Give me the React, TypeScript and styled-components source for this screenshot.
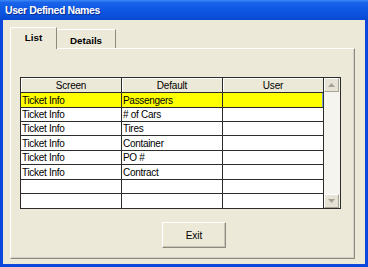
import React from 'react';
import styled, { createGlobalStyle, css } from 'styled-components';

const GlobalStyle = createGlobalStyle`
    html, body {
        margin: 0;
        padding: 0;
        background: #ece9d8;
    }
    * {
        box-sizing: border-box;
    }
`;

interface Row {
    screen: string;
    value: string;
    user: string;
    height: number;
}

const rows: Row[] = [
    { screen: 'Ticket Info', value: 'Passengers', user: '', height: 15 },
    { screen: 'Ticket Info', value: '# of Cars', user: '', height: 14 },
    { screen: 'Ticket Info', value: 'Tires', user: '', height: 14 },
    { screen: 'Ticket Info', value: 'Container', user: '', height: 15 },
    { screen: 'Ticket Info', value: 'PO #', user: '', height: 14 },
    { screen: 'Ticket Info', value: 'Contract', user: '', height: 15 },
    { screen: '', value: '', user: '', height: 14 },
    { screen: '', value: '', user: '', height: 15 },
];

const Window = styled.div`
    width: 368px;
    height: 267px;
    display: flex;
    flex-direction: column;
    background: #0b48db;
    font-family: 'Liberation Sans', Arial, sans-serif;
`;

const TitleBar = styled.div`
    height: 20px;
    flex: none;
    display: flex;
    align-items: center;
    padding: 0 0 1px 5px;
    background: linear-gradient(to bottom, #3d8af7 0%, #1a63ea 12%, #0d56e3 50%, #0a4fd9 85%, #0845cc 100%);
    color: #ffffff;
    font-size: 10.5px;
    font-weight: bold;
    letter-spacing: -0.4px;
    text-shadow: 1px 1px 0 #0a2f8f;
`;

const Client = styled.div`
    flex: 1;
    display: flex;
    flex-direction: column;
    margin: 0 3px 3px 3px;
    padding: 7px 10px 5px 7px;
    background: #ece9d8;
`;

const TabStrip = styled.div`
    height: 21px;
    flex: none;
    display: flex;
    align-items: flex-end;
`;

const Tab = styled.div<{ $active?: boolean; $width: number }>`
    width: ${({ $width }) => $width}px;
    display: flex;
    align-items: center;
    justify-content: center;
    border-top: 1px solid #ffffff;
    border-left: 1px solid #ffffff;
    border-right: 1px solid #8d8b80;
    background: #ece9d8;
    color: #000000;
    font-size: 9.8px;
    font-weight: bold;
    ${({ $active }) =>
        $active
            ? css`
                  height: 22px;
                  margin-bottom: -1px;
                  padding-bottom: 2px;
                  position: relative;
                  z-index: 1;
              `
            : css`
                  height: 19px;
                  padding-top: 2px;
                  border-left: none;
              `}
`;

const Panel = styled.div`
    flex: 1;
    display: flex;
    flex-direction: column;
    align-items: flex-start;
    padding: 28px 0 0 9px;
    border-top: 1px solid #ffffff;
    border-left: 1px solid #ffffff;
    border-right: 1px solid #8d8b80;
    border-bottom: 1px solid #8d8b80;
    box-shadow: inset -1px -1px 0 #d4d0c4;
`;

const GridFrame = styled.div`
    display: flex;
    flex: none;
`;

const Grid = styled.div`
    display: grid;
    grid-template-columns: 101px 101px 101px;
    border-left: 1px solid #2c2c2c;
    border-top: 1px solid #2c2c2c;
`;

const HeaderCell = styled.div`
    height: 15px;
    display: flex;
    align-items: center;
    justify-content: center;
    background: #ece9d8;
    border-right: 1px solid #2c2c2c;
    border-bottom: 1px solid #2c2c2c;
    box-shadow: inset 1px 1px 0 #ffffff;
    font-size: 10px;
    letter-spacing: -0.2px;
    color: #000000;
`;

const Cell = styled.div<{ $selected?: boolean; $height: number; $focus?: boolean }>`
    height: ${({ $height }) => $height}px;
    display: flex;
    align-items: center;
    padding-left: 1px;
    overflow: hidden;
    white-space: nowrap;
    background: ${({ $selected }) => ($selected ? '#ffff00' : '#ffffff')};
    border-right: 1px solid #2c2c2c;
    border-bottom: 1px solid #2c2c2c;
    font-size: 10px;
    letter-spacing: -0.3px;
    color: #000000;
    ${({ $focus }) =>
        $focus &&
        css`
            box-shadow: inset -1px 0 0 #7fa2dc;
        `}
`;

const ScrollBar = styled.div`
    width: 17px;
    display: flex;
    flex-direction: column;
    justify-content: space-between;
    background: #f5f4ef;
    border-top: 1px solid #2c2c2c;
    border-right: 1px solid #2c2c2c;
    border-bottom: 1px solid #2c2c2c;
    padding: 0 1px 0 0;
`;

const ScrollButton = styled.div`
    width: 15px;
    height: 14px;
    display: flex;
    align-items: center;
    justify-content: center;
    background: #e6e3d6;
    border-top: 1px solid #ffffff;
    border-left: 1px solid #ffffff;
    border-right: 1px solid #a7a596;
    border-bottom: 1px solid #a7a596;
`;

const ButtonRow = styled.div`
    margin: 13px 0 0 142px;
`;

const Button = styled.button`
    width: 64px;
    height: 26px;
    padding: 0;
    background: #ece9d8;
    border-top: 1px solid #ffffff;
    border-left: 1px solid #ffffff;
    border-right: 1px solid #8d8b80;
    border-bottom: 1px solid #8d8b80;
    box-shadow: inset -1px -1px 0 #c9c6b8;
    font-family: 'Liberation Sans', Arial, sans-serif;
    font-size: 10px;
    color: #000000;
`;

const Arrow = ({ down }: { down?: boolean }) => (
    <svg width="7" height="4" viewBox="0 0 7 4">
        <path d={down ? 'M0 0 H7 L3.5 4 Z' : 'M0 4 H7 L3.5 0 Z'} fill="#a4a296" />
    </svg>
);

export default function App() {
    return (
        <>
            <GlobalStyle />
            <Window>
                <TitleBar>User Defined Names</TitleBar>
                <Client>
                    <TabStrip>
                        <Tab $active $width={47}>List</Tab>
                        <Tab $width={59}>Details</Tab>
                    </TabStrip>
                    <Panel>
                        <GridFrame>
                            <Grid>
                                <HeaderCell>Screen</HeaderCell>
                                <HeaderCell>Default</HeaderCell>
                                <HeaderCell>User</HeaderCell>
                                {rows.map((row, i) => (
                                    <React.Fragment key={i}>
                                        <Cell $height={row.height} $selected={i === 0}>{row.screen}</Cell>
                                        <Cell $height={row.height} $selected={i === 0}>{row.value}</Cell>
                                        <Cell $height={row.height} $selected={i === 0} $focus={i === 0}>{row.user}</Cell>
                                    </React.Fragment>
                                ))}
                            </Grid>
                            <ScrollBar>
                                <ScrollButton><Arrow /></ScrollButton>
                                <ScrollButton><Arrow down /></ScrollButton>
                            </ScrollBar>
                        </GridFrame>
                        <ButtonRow>
                            <Button>Exit</Button>
                        </ButtonRow>
                    </Panel>
                </Client>
            </Window>
        </>
    );
}
